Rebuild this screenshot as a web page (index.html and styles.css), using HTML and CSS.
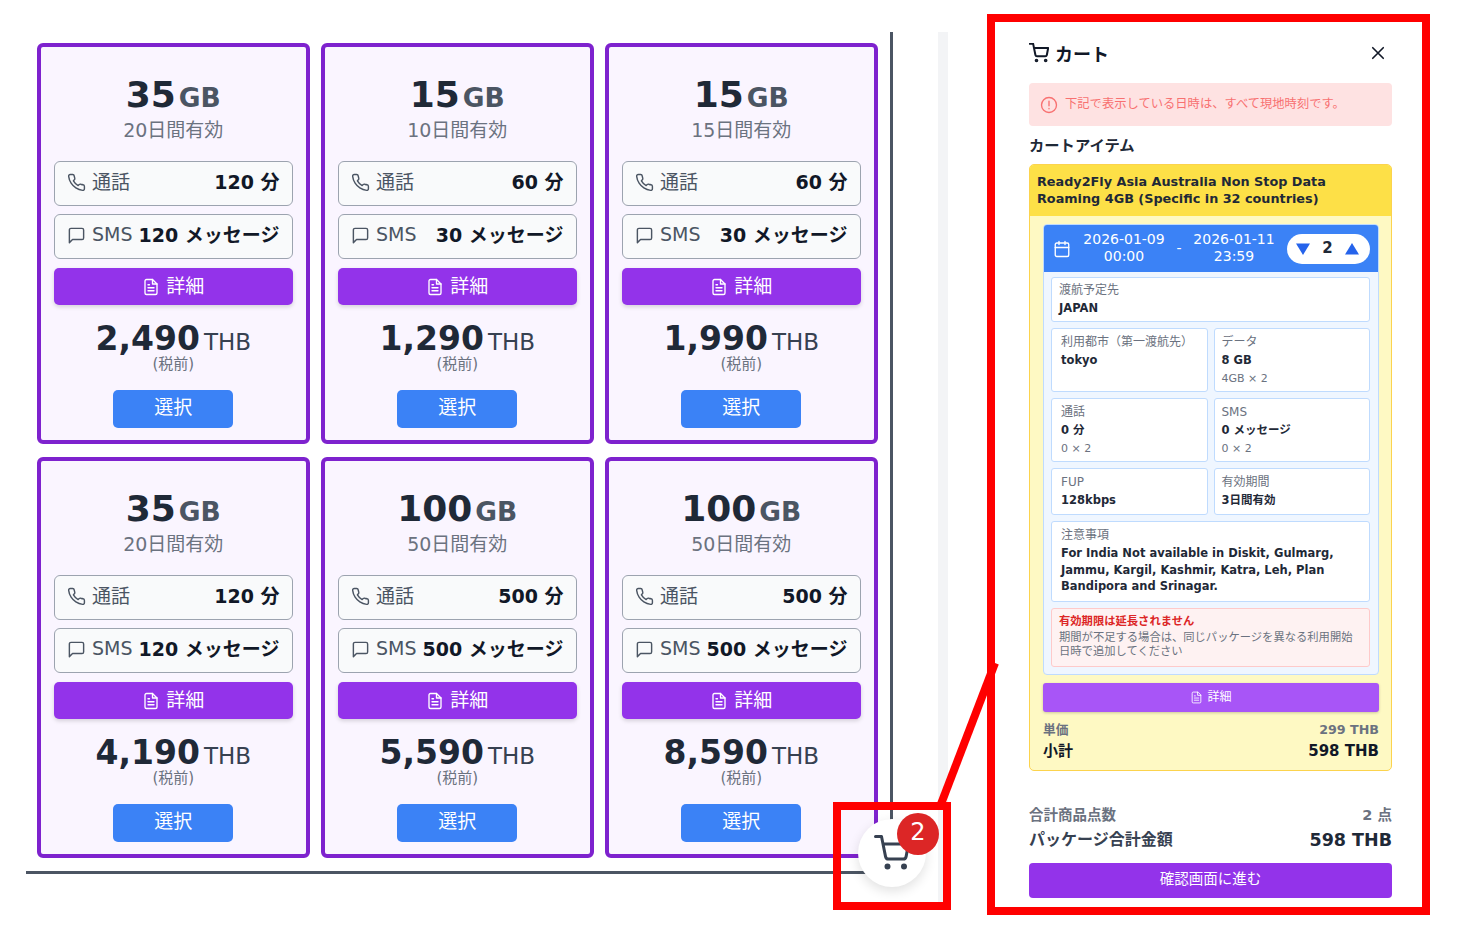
FILE: index.html
```html
<!DOCTYPE html>
<html lang="ja">
<head>
    <meta charset="UTF-8">
    <title>カート</title>
    <link rel="stylesheet" href="styles.css">
</head>
<body>
    <svg class="defs" width="0" height="0">
        <symbol id="i-phone" viewBox="0 0 24 24"><path d="M22 16.900v3a2 2 0 0 1-2.200 2 19.800 19.800 0 0 1-8.600-3.100 19.500 19.500 0 0 1-6-6A19.800 19.800 0 0 1 2.100 4.200 2 2 0 0 1 4.100 2h3a2 2 0 0 1 2 1.700c.1 1 .4 1.900.7 2.800a2 2 0 0 1-.5 2.100L8.100 9.900a16 16 0 0 0 6 6l1.300-1.300a2 2 0 0 1 2.100-.4c.9.300 1.800.6 2.800.7a2 2 0 0 1 1.700 2z"/></symbol>
        <symbol id="i-sms" viewBox="0 0 24 24"><path d="M21 15a2 2 0 0 1-2 2H7l-4 4V5a2 2 0 0 1 2-2h14a2 2 0 0 1 2 2z"/></symbol>
        <symbol id="i-doc" viewBox="0 0 24 24"><path d="M14 2H6a2 2 0 0 0-2 2v16a2 2 0 0 0 2 2h12a2 2 0 0 0 2-2V8z"/><path d="M14 2v6h6M16 13H8M16 17H8M10 9H8"/></symbol>
        <symbol id="i-cart" viewBox="0 0 24 24"><circle cx="9" cy="21" r="1"/><circle cx="20" cy="21" r="1"/><path d="M1 1h4l2.700 13.400a2 2 0 0 0 2 1.600h9.700a2 2 0 0 0 2-1.600L23 6H6"/></symbol>
    </svg>

    <div class="stage">
        <main class="plans-pane">
            <div class="plans">
                <article class="plan">
                    <div class="plan-size"><b>35</b><span>GB</span></div>
                    <div class="plan-days">20日間有効</div>
                    <div class="plan-row"><svg class="ic"><use href="#i-phone"/></svg><span>通話</span><b class="push">120 分</b></div>
                    <div class="plan-row"><svg class="ic"><use href="#i-sms"/></svg><span>SMS</span><b class="push">120 メッセージ</b></div>
                    <button class="plan-detail"><svg class="ic"><use href="#i-doc"/></svg>詳細</button>
                    <div class="plan-price"><b>2,490</b><span>THB</span></div>
                    <div class="plan-tax">(税前)</div>
                    <button class="plan-select">選択</button>
                </article>
                <article class="plan">
                    <div class="plan-size"><b>15</b><span>GB</span></div>
                    <div class="plan-days">10日間有効</div>
                    <div class="plan-row"><svg class="ic"><use href="#i-phone"/></svg><span>通話</span><b class="push">60 分</b></div>
                    <div class="plan-row"><svg class="ic"><use href="#i-sms"/></svg><span>SMS</span><b class="push">30 メッセージ</b></div>
                    <button class="plan-detail"><svg class="ic"><use href="#i-doc"/></svg>詳細</button>
                    <div class="plan-price"><b>1,290</b><span>THB</span></div>
                    <div class="plan-tax">(税前)</div>
                    <button class="plan-select">選択</button>
                </article>
                <article class="plan">
                    <div class="plan-size"><b>15</b><span>GB</span></div>
                    <div class="plan-days">15日間有効</div>
                    <div class="plan-row"><svg class="ic"><use href="#i-phone"/></svg><span>通話</span><b class="push">60 分</b></div>
                    <div class="plan-row"><svg class="ic"><use href="#i-sms"/></svg><span>SMS</span><b class="push">30 メッセージ</b></div>
                    <button class="plan-detail"><svg class="ic"><use href="#i-doc"/></svg>詳細</button>
                    <div class="plan-price"><b>1,990</b><span>THB</span></div>
                    <div class="plan-tax">(税前)</div>
                    <button class="plan-select">選択</button>
                </article>
                <article class="plan">
                    <div class="plan-size"><b>35</b><span>GB</span></div>
                    <div class="plan-days">20日間有効</div>
                    <div class="plan-row"><svg class="ic"><use href="#i-phone"/></svg><span>通話</span><b class="push">120 分</b></div>
                    <div class="plan-row"><svg class="ic"><use href="#i-sms"/></svg><span>SMS</span><b class="push">120 メッセージ</b></div>
                    <button class="plan-detail"><svg class="ic"><use href="#i-doc"/></svg>詳細</button>
                    <div class="plan-price"><b>4,190</b><span>THB</span></div>
                    <div class="plan-tax">(税前)</div>
                    <button class="plan-select">選択</button>
                </article>
                <article class="plan">
                    <div class="plan-size"><b>100</b><span>GB</span></div>
                    <div class="plan-days">50日間有効</div>
                    <div class="plan-row"><svg class="ic"><use href="#i-phone"/></svg><span>通話</span><b class="push">500 分</b></div>
                    <div class="plan-row"><svg class="ic"><use href="#i-sms"/></svg><span>SMS</span><b class="push">500 メッセージ</b></div>
                    <button class="plan-detail"><svg class="ic"><use href="#i-doc"/></svg>詳細</button>
                    <div class="plan-price"><b>5,590</b><span>THB</span></div>
                    <div class="plan-tax">(税前)</div>
                    <button class="plan-select">選択</button>
                </article>
                <article class="plan">
                    <div class="plan-size"><b>100</b><span>GB</span></div>
                    <div class="plan-days">50日間有効</div>
                    <div class="plan-row"><svg class="ic"><use href="#i-phone"/></svg><span>通話</span><b class="push">500 分</b></div>
                    <div class="plan-row"><svg class="ic"><use href="#i-sms"/></svg><span>SMS</span><b class="push">500 メッセージ</b></div>
                    <button class="plan-detail"><svg class="ic"><use href="#i-doc"/></svg>詳細</button>
                    <div class="plan-price"><b>8,590</b><span>THB</span></div>
                    <div class="plan-tax">(税前)</div>
                    <button class="plan-select">選択</button>
                </article>
            </div>
        </main>

        <div class="side-strip"></div>

        <aside class="cart">
            <header class="cart-head">
                <svg class="cart-ic"><use href="#i-cart"/></svg>
                <h2>カート</h2>
                <svg class="cart-close" viewBox="0 0 24 24"><path d="M5 5l14 14M19 5L5 19"/></svg>
            </header>
            <div class="notice">
                <svg class="notice-ic" viewBox="0 0 24 24"><circle cx="12" cy="12" r="10"/><path d="M12 7v6M12 16.500v.5"/></svg>
                <span>下記で表示している日時は、すべて現地時刻です。</span>
            </div>
            <h3 class="cart-sub">カートアイテム</h3>

            <section class="item">
                <div class="item-title">Ready2Fly Asia Australia Non Stop Data Roaming 4GB (Specific in 32 countries)</div>
                <div class="item-body">
                    <div class="trip">
                        <div class="trip-head">
                            <svg class="trip-ic" viewBox="0 0 24 24"><rect x="3" y="4" width="18" height="18" rx="2"/><path d="M16 2v4M8 2v4M3 10h18"/></svg>
                            <div class="trip-date">2026-01-09<br>00:00</div>
                            <div class="trip-dash">-</div>
                            <div class="trip-date">2026-01-11<br>23:59</div>
                            <div class="qty">
                                <svg viewBox="0 0 14 14"><path d="M0 1.500h14L7 13z"/></svg>
                                <b>2</b>
                                <svg viewBox="0 0 14 14"><path d="M0 12.500h14L7 1z"/></svg>
                            </div>
                        </div>
                        <div class="trip-grid">
                            <div class="cell cell-wide cell-place"><label>渡航予定先</label><b>JAPAN</b></div>
                            <div class="cell"><label>利用都市（第一渡航先）</label><b>tokyo</b></div>
                            <div class="cell"><label>データ</label><b>8 GB</b><small>4GB × 2</small></div>
                            <div class="cell"><label>通話</label><b>0 分</b><small>0 × 2</small></div>
                            <div class="cell"><label>SMS</label><b>0 メッセージ</b><small>0 × 2</small></div>
                            <div class="cell cell-tall"><label>FUP</label><b>128kbps</b></div>
                            <div class="cell cell-tall"><label>有効期間</label><b>3日間有効</b></div>
                            <div class="cell cell-wide cell-note"><label>注意事項</label><b>For India Not available in Diskit, Gulmarg, Jammu, Kargil, Kashmir, Katra, Leh, Plan Bandipora and Srinagar.</b></div>
                            <div class="cell cell-wide cell-warn"><strong>有効期限は延長されません</strong><p>期間が不足する場合は、同じパッケージを異なる利用開始日時で追加してください</p></div>
                        </div>
                    </div>
                    <button class="item-detail"><svg class="ic"><use href="#i-doc"/></svg>詳細</button>
                    <div class="line line-unit"><span>単価</span><span>299 THB</span></div>
                    <div class="line line-sub"><span>小計</span><span>598 THB</span></div>
                </div>
            </section>

            <div class="totals">
                <div class="line total-count"><span>合計商品点数</span><span>2 点</span></div>
                <div class="line total-price"><span>パッケージ合計金額</span><span>598 THB</span></div>
                <button class="checkout">確認画面に進む</button>
            </div>
        </aside>

        <button class="cart-fab">
            <svg><use href="#i-cart"/></svg>
            <span class="cart-badge">2</span>
        </button>

        <div class="mark-fab"></div>
        <svg class="mark-line" width="80" height="160" viewBox="0 0 80 160"><path d="M8 144L62 3"/></svg>
    </div>
</body>
</html>
```

FILE: styles.css
```css
* {
    box-sizing: border-box;
}

body {
    margin: 0;
    background: #fff;
    color: #1f2937;
    font-family: "DejaVu Sans", "Noto Sans CJK JP", sans-serif;
}

button {
    font-family: inherit;
    border: 0;
    cursor: pointer;
}

.defs {
    position: absolute;
}

.stage {
    position: relative;
    width: 1462px;
    height: 940px;
    display: flex;
    align-items: flex-start;
    overflow: hidden;
}

.ic {
    width: 16px;
    height: 16px;
    flex: none;
    fill: none;
    stroke: currentColor;
    stroke-width: 2;
    stroke-linecap: round;
    stroke-linejoin: round;
}

/* プラン一覧 */
.plans-pane {
    width: 867px;
    height: 842px;
    margin: 32px 0 0 26px;
    padding: 11px 0 0 11px;
    border-right: 3px solid #4b5563;
    border-bottom: 3px solid #4b5563;
    flex: none;
}

.plans {
    display: grid;
    grid-template-columns: repeat(3, 272.500px);
    grid-auto-rows: 401px;
    column-gap: 11.500px;
    row-gap: 13px;
}

.plan {
    background: #faf5ff;
    border: 4px solid #7e22ce;
    border-radius: 6px;
    padding: 25px 13px 0;
    display: flex;
    flex-direction: column;
    align-items: center;
}

.plan-size {
    display: flex;
    align-items: baseline;
    justify-content: center;
    height: 45px;
    line-height: 45px;
    color: #1f2937;
}

.plan-size b {
    font-size: 36px;
    font-weight: 700;
    margin-right: 3px;
}

.plan-size span {
    font-size: 26.500px;
    font-weight: 700;
    color: #4b5563;
}

.plan-days {
    font-size: 19px;
    line-height: 26px;
    color: #6b7280;
    margin-bottom: 18px;
}

.plan-row {
    width: 100%;
    height: 45px;
    margin-bottom: 8px;
    padding: 0 12px 6px;
    background: #f9fafb;
    border: 1px solid #9ca3af;
    border-radius: 6px;
    display: flex;
    align-items: center;
    gap: 6px;
    font-size: 19px;
    color: #4b5563;
}

.plan-row .ic {
    width: 19px;
    height: 19px;
    margin-top: 3px;
    stroke-width: 1.800;
}

.plan-row b {
    color: #111827;
    font-weight: 700;
}

.push {
    margin-left: auto;
}

.plan-detail {
    width: 100%;
    height: 37px;
    margin-top: 1px;
    padding: 0 0 4px;
    background: #9333ea;
    color: #fff;
    border-radius: 5px;
    box-shadow: 0 2px 4px rgba(0, 0, 0, 0.15);
    font-size: 19px;
    display: flex;
    align-items: center;
    justify-content: center;
    gap: 6px;
}

.plan-detail .ic {
    width: 18px;
    height: 18px;
    margin-top: 4px;
    stroke-width: 1.800;
}

.plan-price {
    display: flex;
    align-items: baseline;
    justify-content: center;
    margin-top: 16px;
    height: 36px;
    line-height: 36px;
    color: #1f2937;
}

.plan-price b {
    font-size: 33px;
    margin-right: 4px;
}

.plan-price span {
    font-size: 23px;
    color: #374151;
}

.plan-tax {
    font-size: 15px;
    line-height: 15px;
    color: #6b7280;
}

.plan-select {
    width: 120px;
    height: 38px;
    margin-top: 18px;
    padding: 0 0 7px;
    background: #3b82f6;
    color: #fff;
    border-radius: 5px;
    font-size: 19px;
}

.side-strip {
    width: 10px;
    height: 870px;
    margin: 32px 0 0 45px;
    background: #f3f4f6;
    flex: none;
}

/* カート */
.cart {
    width: 443px;
    height: 901px;
    margin: 14px 0 0 39px;
    padding: 19px 30px 0 34px;
    border: 8px solid #f00;
    flex: none;
}

.cart-head {
    display: flex;
    align-items: center;
    gap: 6px;
    height: 24px;
    margin-bottom: 18px;
}

.cart-ic {
    width: 20px;
    height: 20px;
    fill: none;
    stroke: #111827;
    stroke-width: 2.400;
    stroke-linecap: round;
    stroke-linejoin: round;
}

.cart-head h2 {
    margin: 0;
    font-size: 18px;
    font-weight: 700;
    color: #111827;
}

.cart-close {
    width: 18px;
    height: 18px;
    margin-left: auto;
    margin-right: 5px;
    fill: none;
    stroke: #111827;
    stroke-width: 2.200;
    stroke-linecap: round;
}

.notice {
    height: 43px;
    padding: 0 11px 3px;
    background: #fee2e2;
    border-radius: 4px;
    display: flex;
    align-items: center;
    gap: 7px;
    font-size: 12.300px;
    color: #f87171;
}

.notice-ic {
    width: 18px;
    height: 18px;
    flex: none;
    margin-top: 3px;
    fill: none;
    stroke: #f87171;
    stroke-width: 1.800;
    stroke-linecap: round;
}

.cart-sub {
    margin: 10px 0 7px;
    font-size: 15.300px;
    line-height: 21px;
    font-weight: 700;
    color: #1f2937;
}

.item {
    border: 1px solid #fcd34d;
    border-radius: 5px;
    background: #fef9c3;
    overflow: hidden;
}

.item-title {
    background: #fde047;
    height: 51px;
    padding: 8px 7px 0;
    font-size: 12.800px;
    line-height: 17px;
    font-weight: 700;
    color: #1f2937;
}

.item-body {
    padding: 8px 12px 8px 13px;
}

.trip {
    background: #eff6ff;
    border: 1px solid #bfdbfe;
    border-radius: 4px;
    overflow: hidden;
}

.trip-head {
    background: #3b82f6;
    color: #fff;
    height: 47px;
    margin: 0 0 5px;
    padding: 0 8px 0 9px;
    display: flex;
    align-items: center;
    font-size: 14px;
    line-height: 17px;
}

.trip-ic {
    width: 18px;
    height: 18px;
    flex: none;
    fill: none;
    stroke: #fff;
    stroke-width: 1.800;
    stroke-linecap: round;
    margin-right: 12px;
}

.trip-date {
    text-align: center;
    width: 82px;
    margin-top: -2px;
}

.trip-dash {
    width: 28px;
    text-align: center;
}

.qty {
    width: 83px;
    height: 30px;
    margin-left: auto;
    padding: 0 11px 0 9px;
    background: #fff;
    border-radius: 15px;
    color: #1f2937;
    display: flex;
    align-items: center;
    justify-content: space-between;
    font-size: 15px;
}

.qty svg {
    width: 14px;
    height: 14px;
    fill: #2563eb;
}

.trip-grid {
    display: grid;
    grid-template-columns: 1fr 1fr;
    gap: 6px;
    padding: 0 8px 7px 7px;
}

.cell {
    background: #fff;
    border: 1px solid #bfdbfe;
    border-radius: 3px;
    padding: 5px 8px 3px 9px;
    display: flex;
    flex-direction: column;
}

.cell:nth-child(odd) {
    padding-left: 7px;
}

.cell-wide {
    grid-column: span 2;
}

.cell-place {
    padding-top: 4px;
    padding-bottom: 4px;
}

.cell-tall {
    min-height: 47px;
}

.cell label {
    font-size: 12px;
    line-height: 17px;
    color: #6b7280;
}

.cell b {
    font-size: 11.500px;
    line-height: 18px;
    font-weight: 700;
    color: #1f2937;
}

.cell small {
    font-size: 11px;
    line-height: 19px;
    color: #6b7280;
}

.cell-note {
    padding-bottom: 6px;
}

.cell-note b {
    line-height: 16.500px;
    margin-top: 1px;
}

.cell-warn {
    background: #fef2f2;
    border-color: #fecaca;
    padding-bottom: 7px;
}

.cell-warn strong {
    font-size: 11.300px;
    line-height: 15px;
    color: #dc2626;
}

.cell-warn p {
    margin: 2px 0 0;
    font-size: 11.300px;
    line-height: 14px;
    color: #6b7280;
}

.item-detail {
    width: 100%;
    height: 29px;
    margin-top: 8px;
    padding: 0 0 3px;
    background: #a855f7;
    color: #fff;
    border-radius: 3px;
    box-shadow: 0 1px 3px rgba(0, 0, 0, 0.2);
    font-size: 12px;
    display: flex;
    align-items: center;
    justify-content: center;
    gap: 4px;
}

.item-detail .ic {
    width: 13px;
    height: 13px;
    margin-top: 3px;
    stroke-width: 1.600;
}

.line {
    display: flex;
    justify-content: space-between;
    align-items: center;
}

.line-unit {
    margin-top: 8px;
    font-size: 12.700px;
    line-height: 20px;
    font-weight: 700;
    color: #6b7280;
}

.line-sub {
    font-size: 15px;
    line-height: 22px;
    font-weight: 700;
    color: #111827;
}

.totals {
    margin-top: 34px;
}

.total-count {
    font-size: 14.500px;
    line-height: 21px;
    font-weight: 700;
    color: #6b7280;
}

.total-price {
    font-size: 16px;
    line-height: 28px;
    font-weight: 700;
    color: #374151;
}

.total-price span:last-child {
    font-size: 17.500px;
    color: #1f2937;
}

.checkout {
    width: 100%;
    height: 35px;
    margin-top: 9px;
    padding: 0 0 5px;
    background: #9333ea;
    color: #fff;
    border-radius: 4px;
    font-size: 14.500px;
}

/* 右下のカートボタンと赤い注釈 */
.cart-fab {
    position: absolute;
    left: 858px;
    top: 819px;
    width: 68px;
    height: 68px;
    border-radius: 50%;
    background: #fff;
    color: #374151;
    box-shadow: 0 4px 12px rgba(0, 0, 0, 0.12);
    display: flex;
    align-items: center;
    justify-content: center;
    padding: 0;
}

.cart-fab svg {
    width: 36px;
    height: 36px;
    fill: none;
    stroke: currentColor;
    stroke-width: 2;
    stroke-linecap: round;
    stroke-linejoin: round;
}

.cart-badge {
    position: absolute;
    right: -13px;
    top: -6px;
    width: 42px;
    height: 42px;
    border-radius: 50%;
    background: #dc2626;
    color: #fff;
    font-size: 24px;
    line-height: 39px;
    text-align: center;
}

.mark-fab {
    position: absolute;
    left: 833px;
    top: 802px;
    width: 118px;
    height: 108px;
    border: 8px solid #f00;
    pointer-events: none;
}

.mark-line {
    position: absolute;
    left: 933px;
    top: 660px;
    fill: none;
    stroke: #f00;
    stroke-width: 8;
}
```
